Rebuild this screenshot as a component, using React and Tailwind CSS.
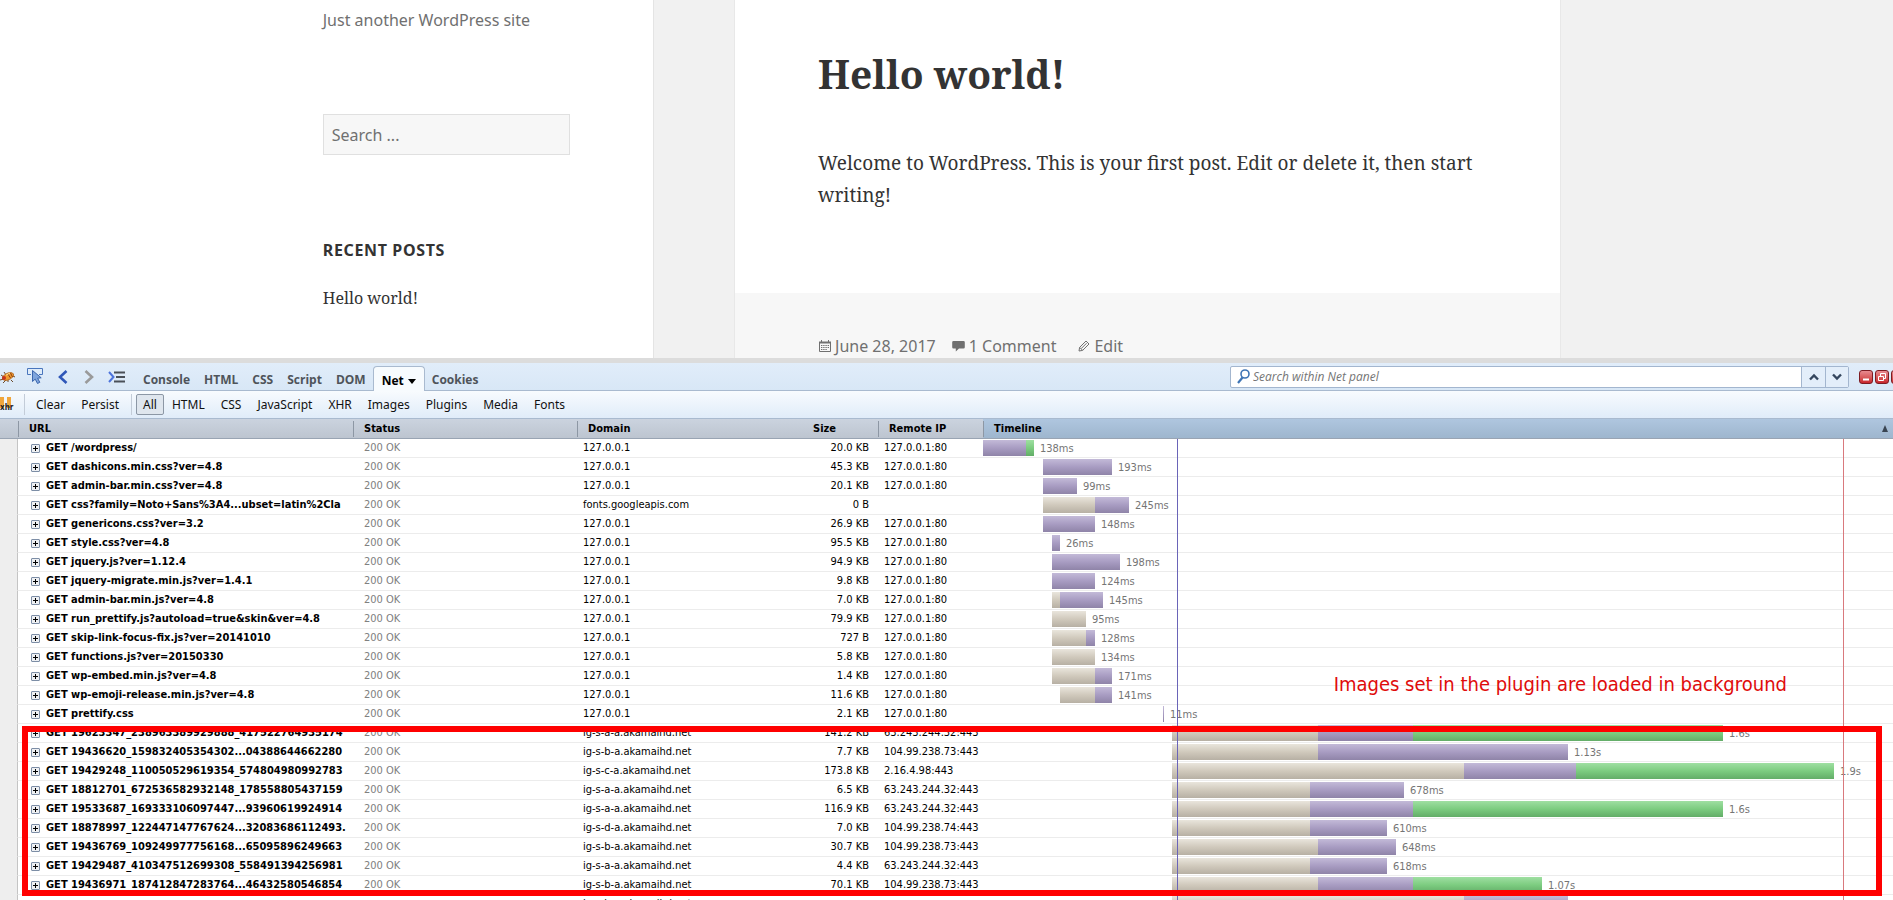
import React, { useState } from 'react';

const TABS = ['Console', 'HTML', 'CSS', 'Script', 'DOM', 'Net', 'Cookies'];

const FILTERS = ['All', 'HTML', 'CSS', 'JavaScript', 'XHR', 'Images', 'Plugins', 'Media', 'Fonts'];

// Width of the timeline in its own units; bar positions below use the same units
const TIMELINE_UNITS = 910;
const DOM_READY = 194;
const PAGE_LOADED = 860;

const PHASE_STYLES = {
  wait: 'bg-linear-to-b from-[#e9e5dc] via-[#d0c9bc] to-[#b7b0a4]',
  receive: 'bg-linear-to-b from-[#c3bad8] via-[#a89cc2] to-[#8f84a8]',
  load: 'bg-linear-to-b from-[#9fdfa2] via-[#7ccc80] to-[#63ad68]',
};

const LOCAL = '127.0.0.1';
const LOCAL_IP = '127.0.0.1:80';

const REQUESTS = [
  { url: '/wordpress/', domain: LOCAL, size: '20.0 KB', ip: LOCAL_IP, start: 0, phases: [['receive', 43], ['load', 8]], time: '138ms' },
  { url: 'dashicons.min.css?ver=4.8', domain: LOCAL, size: '45.3 KB', ip: LOCAL_IP, start: 60, phases: [['receive', 69]], time: '193ms' },
  { url: 'admin-bar.min.css?ver=4.8', domain: LOCAL, size: '20.1 KB', ip: LOCAL_IP, start: 60, phases: [['receive', 34]], time: '99ms' },
  { url: 'css?family=Noto+Sans%3A4...ubset=latin%2Cla', domain: 'fonts.googleapis.com', size: '0 B', ip: '', start: 60, phases: [['wait', 52], ['receive', 34]], time: '245ms' },
  { url: 'genericons.css?ver=3.2', domain: LOCAL, size: '26.9 KB', ip: LOCAL_IP, start: 60, phases: [['receive', 52]], time: '148ms' },
  { url: 'style.css?ver=4.8', domain: LOCAL, size: '95.5 KB', ip: LOCAL_IP, start: 69, phases: [['receive', 8]], time: '26ms' },
  { url: 'jquery.js?ver=1.12.4', domain: LOCAL, size: '94.9 KB', ip: LOCAL_IP, start: 69, phases: [['receive', 68]], time: '198ms' },
  { url: 'jquery-migrate.min.js?ver=1.4.1', domain: LOCAL, size: '9.8 KB', ip: LOCAL_IP, start: 69, phases: [['receive', 43]], time: '124ms' },
  { url: 'admin-bar.min.js?ver=4.8', domain: LOCAL, size: '7.0 KB', ip: LOCAL_IP, start: 69, phases: [['wait', 8], ['receive', 43]], time: '145ms' },
  { url: 'run_prettify.js?autoload=true&skin&ver=4.8', domain: LOCAL, size: '79.9 KB', ip: LOCAL_IP, start: 69, phases: [['wait', 34]], time: '95ms' },
  { url: 'skip-link-focus-fix.js?ver=20141010', domain: LOCAL, size: '727 B', ip: LOCAL_IP, start: 69, phases: [['wait', 34], ['receive', 9]], time: '128ms' },
  { url: 'functions.js?ver=20150330', domain: LOCAL, size: '5.8 KB', ip: LOCAL_IP, start: 69, phases: [['wait', 43]], time: '134ms' },
  { url: 'wp-embed.min.js?ver=4.8', domain: LOCAL, size: '1.4 KB', ip: LOCAL_IP, start: 69, phases: [['wait', 43], ['receive', 17]], time: '171ms' },
  { url: 'wp-emoji-release.min.js?ver=4.8', domain: LOCAL, size: '11.6 KB', ip: LOCAL_IP, start: 77, phases: [['wait', 35], ['receive', 17]], time: '141ms' },
  { url: 'prettify.css', domain: LOCAL, size: '2.1 KB', ip: LOCAL_IP, start: 180, phases: [['receive', 1]], time: '11ms' },
  { url: '19623347_238963389929888_417522764935174', domain: 'ig-s-a-a.akamaihd.net', size: '141.2 KB', ip: '63.243.244.32:443', start: 189, phases: [['wait', 146], ['receive', 95], ['load', 310]], time: '1.6s' },
  { url: '19436620_159832405354302...04388644662280', domain: 'ig-s-b-a.akamaihd.net', size: '7.7 KB', ip: '104.99.238.73:443', start: 189, phases: [['wait', 146], ['receive', 250]], time: '1.13s' },
  { url: '19429248_110050529619354_574804980992783', domain: 'ig-s-c-a.akamaihd.net', size: '173.8 KB', ip: '2.16.4.98:443', start: 189, phases: [['wait', 292], ['receive', 112], ['load', 258]], time: '1.9s' },
  { url: '18812701_672536582932148_178558805437159', domain: 'ig-s-a-a.akamaihd.net', size: '6.5 KB', ip: '63.243.244.32:443', start: 189, phases: [['wait', 138], ['receive', 94]], time: '678ms' },
  { url: '19533687_169333106097447...93960619924914', domain: 'ig-s-a-a.akamaihd.net', size: '116.9 KB', ip: '63.243.244.32:443', start: 189, phases: [['wait', 138], ['receive', 103], ['load', 310]], time: '1.6s' },
  { url: '18878997_122447147767624...32083686112493.', domain: 'ig-s-d-a.akamaihd.net', size: '7.0 KB', ip: '104.99.238.74:443', start: 189, phases: [['wait', 138], ['receive', 77]], time: '610ms' },
  { url: '19436769_109249977756168...65095896249663', domain: 'ig-s-b-a.akamaihd.net', size: '30.7 KB', ip: '104.99.238.73:443', start: 189, phases: [['wait', 146], ['receive', 78]], time: '648ms' },
  { url: '19429487_410347512699308_558491394256981', domain: 'ig-s-a-a.akamaihd.net', size: '4.4 KB', ip: '63.243.244.32:443', start: 189, phases: [['wait', 138], ['receive', 77]], time: '618ms' },
  { url: '19436971_187412847283764...46432580546854', domain: 'ig-s-b-a.akamaihd.net', size: '70.1 KB', ip: '104.99.238.73:443', start: 189, phases: [['wait', 146], ['receive', 95], ['load', 129]], time: '1.07s' },
  { url: '', domain: 'ig-s-b-a.akamaihd.net', size: '', ip: '', start: 189, phases: [['wait', 292], ['receive', 104]], time: '' },
];

const percent = (units) => `${(units / TIMELINE_UNITS) * 100}%`;

const CalendarIcon = () => (
  <svg width="12" height="13" viewBox="0 0 12 13" fill="none" stroke="#707070" aria-hidden="true">
    <path d="M0.5 2.5h11v9h-11z" />
    <path d="M0 2.5h12" strokeWidth="2" />
    <path d="M2.5 0v2M9.5 0v2" />
    <path d="M2 5.5h8M2 7.5h8M2 9.5h6" strokeDasharray="1.4 0.8" />
  </svg>
);

const CommentIcon = () => (
  <svg width="13" height="12" viewBox="0 0 13 12" fill="#707070" aria-hidden="true">
    <path d="M1.5 1h10A1.3 1.3 0 0 1 12.8 2.3v5A1.3 1.3 0 0 1 11.5 8.6H7L3.8 11.6V8.6H1.5A1.3 1.3 0 0 1 .2 7.3v-5A1.3 1.3 0 0 1 1.5 1z" />
  </svg>
);

const EditIcon = () => (
  <svg width="12" height="12" viewBox="0 0 12 12" fill="none" stroke="#707070" aria-hidden="true">
    <path d="M1 11l.6-3.6L8 1l3 3-6.4 6.4z" />
    <path d="M3.2 8.6L8.6 3.2M1.7 7.4l2.9 2.9" />
  </svg>
);

const BugIcon = () => (
  <svg width="16" height="16" viewBox="0 0 16 16" aria-hidden="true">
    <path d="M1 6l3 2M0 11l4-1M3 14l3-3M8 13l0-3M11 11l2 2M4 3l2 3M13 7l2 1" stroke="#6b4a2b" fill="none" />
    <ellipse cx="8" cy="7.5" rx="6" ry="3.3" transform="rotate(-25 8 7.5)" fill="#f0992f" stroke="#a85d16" strokeWidth="0.7" />
    <path d="M8 5l2.5 4M10.5 4l2 4" stroke="#8a3f0c" />
    <circle cx="4" cy="9" r="2" fill="#c3341c" />
    <path d="M6 6.2l4-2.2" stroke="#ffdf8c" />
  </svg>
);

const InspectIcon = () => (
  <svg width="17" height="17" viewBox="0 0 17 17" aria-hidden="true">
    <path d="M4 6.5H.5v-6h15v6H12" fill="none" stroke="#4a76bd" />
    <path d="M5.5 2.5v11l2.7-2.4 2.3 4.4 2.3-1.2-2.2-4.1 3.6-.4z" fill="#7fa5dc" stroke="#3b66ad" />
  </svg>
);

const BackIcon = () => (
  <svg width="10" height="14" viewBox="0 0 10 14" fill="none" stroke="#2f57b8" strokeWidth="2.6" aria-hidden="true">
    <path d="M8.5 1L2 7l6.5 6" />
  </svg>
);

const ForwardIcon = () => (
  <svg width="10" height="14" viewBox="0 0 10 14" fill="none" stroke="#9a9a9a" strokeWidth="2.6" aria-hidden="true">
    <path d="M1.5 1L8 7l-6.5 6" />
  </svg>
);

const UpIcon = () => (
  <svg width="10" height="8" viewBox="0 0 10 8" fill="none" stroke="#34465e" strokeWidth="2.4" aria-hidden="true">
    <path d="M1 6.5L5 2.5l4 4" />
  </svg>
);

const DownIcon = () => (
  <svg width="10" height="8" viewBox="0 0 10 8" fill="none" stroke="#34465e" strokeWidth="2.4" aria-hidden="true">
    <path d="M1 1.5l4 4 4-4" />
  </svg>
);

const CommandIcon = () => (
  <svg width="17" height="12" viewBox="0 0 17 12" fill="none" aria-hidden="true">
    <path d="M1 1l4.5 5L1 11" stroke="#4d74dd" strokeWidth="2" />
    <path d="M6 1.5h11M8 6h9M6 10.5h11" stroke="#4a5058" strokeWidth="2" />
  </svg>
);

const BreakIcon = () => (
  <svg width="14" height="15" viewBox="0 0 14 15" aria-hidden="true">
    <rect x="0" y="0" width="4" height="11" fill="#f0a63c" />
    <rect x="7" y="0" width="4" height="11" fill="#f0a63c" />
    <text x="0" y="13" fontSize="8" fontWeight="700" fontFamily="'DejaVu Sans Condensed', sans-serif" fill="#222">xhr</text>
  </svg>
);

const SearchIcon = () => (
  <svg width="13" height="16" viewBox="0 0 13 16" fill="none" stroke="#3f75b5" aria-hidden="true">
    <circle cx="8" cy="5" r="4" strokeWidth="1.6" />
    <path d="M5.5 8.5L1 14" strokeWidth="2.2" />
  </svg>
);

const ExpandIcon = () => (
  <svg width="9" height="9" viewBox="0 0 9 9" className="shrink-0" aria-hidden="true">
    <rect x="0.5" y="0.5" width="8" height="8" rx="0.5" fill="#eef0f3" stroke="#7d8ea6" />
    <path d="M2 4.5h5M4.5 2v5" stroke="#000" />
  </svg>
);

const WindowButton = ({ label, children }) => (
  <button
    type="button"
    aria-label={label}
    className="w-[14px] h-[14px] shrink-0 rounded-[3px] border border-[#7d1c22] bg-linear-to-b from-[#e88a90] to-[#c8232c]"
  >
    <svg width="12" height="12" viewBox="0 0 12 12" fill="none" stroke="#fff" aria-hidden="true">
      {children}
    </svg>
  </button>
);

const BlogPage = () => (
  <div className="flex h-[358px] shrink-0 overflow-hidden bg-[#f1f1f1] font-['Noto_Sans',sans-serif]">
    <aside className="w-[34.55%] shrink-0 border-r border-[#e4e4e4] bg-white pl-[17.05%] pt-2">
      <p className="text-[16px] leading-6 text-[#707070]">Just another WordPress site</p>
      <input
        type="search"
        aria-label="Search for"
        placeholder="Search ..."
        className="mt-[82px] block h-[41px] w-[247px] border border-[#e0e0e0] bg-[#f7f7f7] px-2 text-[16px] text-[#333] placeholder:text-[#707070]"
      />
      <h2 className="mt-[83px] text-[16px] leading-6 font-bold tracking-[0.04em] text-[#333]">RECENT POSTS</h2>
      <a href="#hello-world" className="mt-6 block font-['Noto_Serif','DejaVu_Serif_Condensed','DejaVu_Serif',serif] text-[16px] leading-6 text-[#333]">
        Hello world!
      </a>
    </aside>

    <article className="ml-20 flex w-[43.7%] flex-col border-x border-[#e8e8e8] bg-white">
      <div className="h-[293px] px-[83px] pt-[50px] font-['Noto_Serif','DejaVu_Serif_Condensed','DejaVu_Serif',serif] text-[#333]">
        <h1 className="text-[39px] leading-12 font-bold">Hello world!</h1>
        <p className="mt-[49px] text-[19px] leading-8">
          Welcome to WordPress. This is your first post. Edit or delete it, then start writing!
        </p>
      </div>
      <footer className="flex flex-1 items-start bg-[#f7f7f7] px-[84px] pt-[41px] text-[16px] leading-6 text-[#707070]">
        <a href="#date" className="flex items-center gap-1"><CalendarIcon />June 28, 2017</a>
        <a href="#comments" className="ml-4 flex items-center gap-1"><CommentIcon />1 Comment</a>
        <a href="#edit" className="ml-[22px] flex items-center gap-1"><EditIcon />Edit</a>
      </footer>
    </article>
  </div>
);

const MainToolbar = ({ tab, onTab }) => (
  <div className="flex h-7 shrink-0 items-center border-b border-[#a9bacf] bg-linear-to-b from-[#e1edfa] to-[#d8e7f6]">
    <button type="button" aria-label="Firebug menu" className="w-[27px]"><BugIcon /></button>
    <button type="button" aria-label="Inspect element" className="w-[31px]"><InspectIcon /></button>
    <button type="button" aria-label="Back" className="w-[26px]"><BackIcon /></button>
    <button type="button" aria-label="Forward" className="w-6"><ForwardIcon /></button>
    <button type="button" aria-label="Command line" className="w-[27px]"><CommandIcon /></button>

    <div role="tablist" className="ml-px flex items-end self-end font-['Open_Sans',sans-serif] text-[12px] font-bold">
      {TABS.map((name) => (
        <button
          key={name}
          type="button"
          role="tab"
          aria-selected={tab === name}
          onClick={() => onTab(name)}
          className={
            tab === name
              ? '-mb-px flex h-[25px] items-center gap-1 rounded-t-[4px] border border-b-0 border-[#a9bacf] bg-[#f7fbfe] px-2 pt-1 text-black'
              : 'flex h-6 items-center px-[7px] pt-1 text-[#4f545a]'
          }
        >
          {name}
          {tab === name && (
            <svg width="8" height="5" viewBox="0 0 8 5" aria-hidden="true"><path d="M0 0h8L4 5z" fill="#000" /></svg>
          )}
        </button>
      ))}
    </div>

    <div className="ml-auto flex h-[22px] w-[619px] items-center rounded-[2px] border border-[#a3b6cf] bg-white pl-[6px]">
      <SearchIcon />
      <input
        type="search"
        aria-label="Search within Net panel"
        placeholder="Search within Net panel"
        className="ml-[3px] min-w-0 flex-1 font-['Open_Sans',sans-serif] text-[12px] italic placeholder:text-[#757575]"
      />
      <button type="button" aria-label="Previous match" className="flex h-full w-6 items-center justify-center border-l border-[#a3b6cf] bg-[#e3eefa]">
        <UpIcon />
      </button>
      <button type="button" aria-label="Next match" className="flex h-full w-[23px] items-center justify-center border-l border-[#a3b6cf] bg-[#e3eefa]">
        <DownIcon />
      </button>
    </div>
    <div className="ml-[10px] flex w-[34px] gap-[2px] overflow-hidden">
      <WindowButton label="Minimize"><path d="M3 8.5h6" strokeWidth="2" /></WindowButton>
      <WindowButton label="Detach"><path d="M2.5 5.5h5v4h-5zM4.5 5V2.5h5v5H8" /></WindowButton>
      <WindowButton label="Close"><path d="M3 3l6 6M9 3l-6 6" strokeWidth="2" /></WindowButton>
    </div>
  </div>
);

const NetToolbar = ({ filter, onFilter }) => (
  <div className="flex h-7 shrink-0 items-center border-b border-[#a9bacf] bg-linear-to-b from-[#f8fbfe] to-[#e0ecf9] font-['Noto_Sans',sans-serif] text-[12px] text-[#111]">
    <button type="button" aria-label="Break on XHR" className="w-6"><BreakIcon /></button>
    <span className="h-[21px] w-px bg-[#c3ccd8]" />
    <button type="button" className="ml-[3px] px-2">Clear</button>
    <button type="button" className="px-2">Persist</button>
    <span className="mx-1 h-[21px] w-px bg-[#c3ccd8]" />
    {FILTERS.map((name) => (
      <button
        key={name}
        type="button"
        aria-pressed={filter === name}
        onClick={() => onFilter(name)}
        className={
          filter === name
            ? 'h-[21px] rounded-[2px] border border-[#8c97a5] bg-[#dfe6ee] px-[6px]'
            : 'h-[21px] px-2'
        }
      >
        {name}
      </button>
    ))}
  </div>
);

const HeaderCell = ({ children, className = '' }) => (
  <th
    scope="col"
    className={`h-5 border-b border-b-[#99a4b3] p-0 text-left font-bold ${className}`}
  >
    <div className="flex h-4 items-center border-l border-[#8d97a4] pl-[10px] leading-4">{children}</div>
  </th>
);

const TimelineBar = ({ start, phases, time }) => (
  <div className="flex h-4 text-[#757575]" style={{ paddingLeft: percent(start) }}>
    <div className="flex w-full min-w-0">
      {phases.map(([phase, units]) => (
        <span
          key={phase}
          className={`h-4 shrink-0 ${PHASE_STYLES[phase]}`}
          style={{ width: `${(units / (TIMELINE_UNITS - start)) * 100}%` }}
        />
      ))}
      <span className="pl-[6px] pt-px leading-4">{time}</span>
    </div>
  </div>
);

const RequestRow = ({ request }) => (
  <tr className="[&>td]:h-[19px] [&>td]:border-b [&>td]:border-[#ececec] [&>td]:p-0 [&>td]:leading-4">
    <td className="border-r border-r-[#c4c4c4]! border-b-[#eeeeee]! bg-[#eeeeee]" />
    <td>
      <div className="mr-[7px] flex items-center gap-[6px] overflow-hidden pl-[13px] font-bold whitespace-nowrap">
        <ExpandIcon />
        {request.url && <a href="#request">GET {request.url}</a>}
      </div>
    </td>
    <td className="text-[#808080]">{request.url && <div className="pl-[11px]">200 OK</div>}</td>
    <td><div className="pl-[6px]">{request.domain}</div></td>
    <td className="text-right"><div className="pr-[9px]">{request.size}</div></td>
    <td className="whitespace-nowrap"><div className="pl-[6px]">{request.ip}</div></td>
    <td><TimelineBar start={request.start} phases={request.phases} time={request.time} /></td>
  </tr>
);

const NetPanel = () => (
  <div className="relative font-['DejaVu_Sans_Condensed','DejaVu_Sans',sans-serif] text-[11px] text-black">
    <table className="w-full table-fixed border-separate border-spacing-0 bg-white">
      <colgroup>
        <col className="w-[18px]" />
        <col className="w-[335px]" />
        <col className="w-[224px]" />
        <col className="w-[225px]" />
        <col className="w-[76px]" />
        <col className="w-[105px]" />
        <col />
      </colgroup>
      <thead>
        <tr className="bg-linear-to-b from-[#cbd3df] to-[#bcc4cf]">
          <td className="border-b border-b-[#99a4b3] p-0" />
          <HeaderCell>URL</HeaderCell>
          <HeaderCell>Status</HeaderCell>
          <HeaderCell>Domain</HeaderCell>
          <HeaderCell className="[&>div]:border-transparent">Size</HeaderCell>
          <HeaderCell>Remote IP</HeaderCell>
          <HeaderCell className="bg-linear-to-b from-[#afc6df] to-[#9eb6ce]">
            Timeline
            <svg width="6" height="7" viewBox="0 0 6 7" className="mr-[5px] ml-auto" aria-hidden="true"><path d="M3 0l3 7H0z" fill="#3a4552" /></svg>
          </HeaderCell>
        </tr>
      </thead>
      <tbody>
        {REQUESTS.map((request, index) => (
          <RequestRow key={index} request={request} />
        ))}
      </tbody>
    </table>

    {/* DOMContentLoaded and load markers */}
    <div className="pointer-events-none absolute top-5 right-0 bottom-0 left-[983px]">
      <span className="absolute inset-y-0 w-px bg-[#6a64b8]" style={{ left: percent(DOM_READY) }} />
      <span className="absolute inset-y-0 w-px bg-[#d9797d]" style={{ left: percent(PAGE_LOADED) }} />
    </div>

    {/* Annotation over the background image requests */}
    <p className="pointer-events-none absolute top-[253px] right-[106px] text-[20px] leading-6 text-[#e00b0b]">
      Images set in the plugin are loaded in background
    </p>
    <div className="pointer-events-none absolute top-[307px] right-[11px] left-[22px] h-[170px] border-6 border-[#ff0000]" />
  </div>
);

const App = () => {
  const [tab, setTab] = useState('Net');
  const [filter, setFilter] = useState('All');

  return (
    <div className="flex h-screen flex-col overflow-hidden bg-white">
      <BlogPage />
      <section aria-label="Firebug" className="min-h-0 flex-1 overflow-hidden border-t-[5px] border-[#dcdcdc]">
        <MainToolbar tab={tab} onTab={setTab} />
        <NetToolbar filter={filter} onFilter={setFilter} />
        <NetPanel />
      </section>
    </div>
  );
};

export default App;
